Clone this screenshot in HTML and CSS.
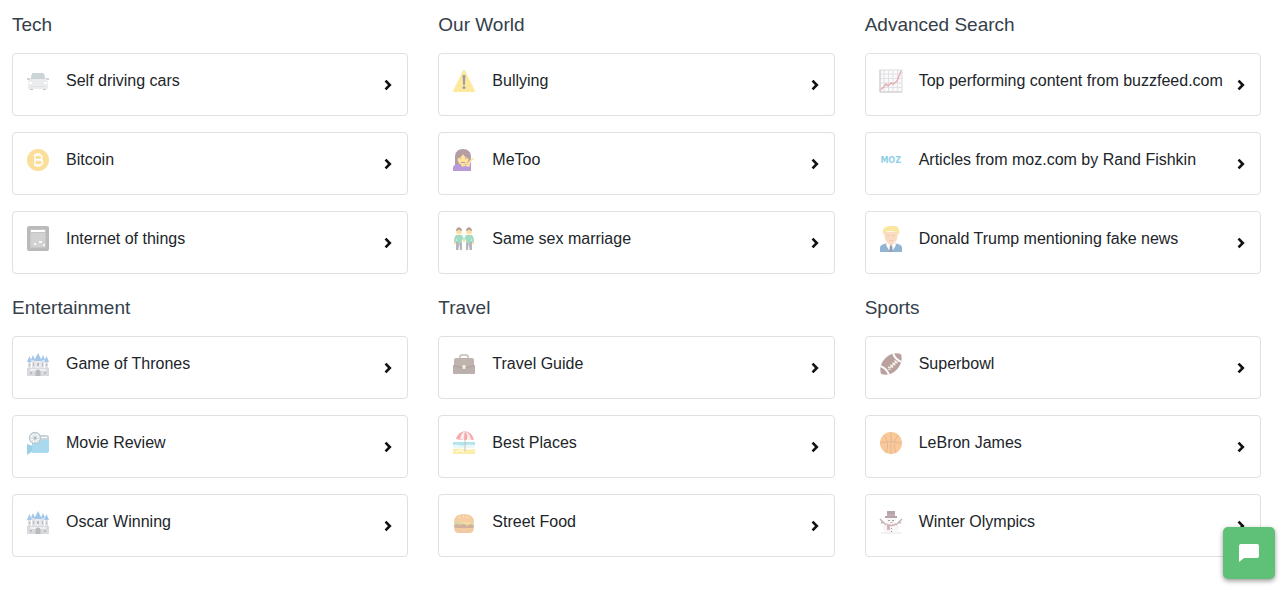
FILE: index.html
```html
<!DOCTYPE html>
<html lang="en">
<head>
    <meta charset="UTF-8">
    <meta name="viewport" content="width=device-width, initial-scale=1.0">
    <title>Content Ideas</title>
    <link rel="stylesheet" href="styles.css">
</head>
<body>
    <!-- Shared shapes -->
    <svg class="sprite" aria-hidden="true">
        <symbol id="chevron" viewBox="0 0 8 12">
            <path d="M1.5 1.7 5.8 6 1.5 10.3" fill="none" stroke="currentColor" stroke-width="2.6"/>
        </symbol>
        <symbol id="castle" viewBox="0 0 24 24">
            <path d="M2 9h3v10H2zM19 9h3v10h-3zM6 8h4v11H6zM14 8h4v11h-4z" fill="#c3c5cd"/>
            <path d="M9 9h6v10H9z" fill="#d4d6dc"/>
            <path d="M1 16h22v8H1z" fill="#b4b6bc"/>
            <path d="M4 17h16v2H4z" fill="#e2e3e6"/>
            <path d="M12 1l4 8H8zM7 3l2 5H5zM17 3l2 5h-4zM3.500 4L6 10H1zM20.500 4L23 10h-5z" fill="#4a8fd8"/>
            <path d="M9.500 24v-4a2.500 2.500 0 0 1 5 0v4z" fill="#77787f"/>
            <path d="M11 11h2v3h-2zM7 11h1v3H7zM16 11h1v3h-1zM3 12h1v2H3zM20 12h1v2h-1zM4 20h2v2H4zM18 20h2v2h-2z" fill="#777a85"/>
        </symbol>
    </svg>

    <main class="topics">
        <section class="topic">
            <h2>Tech</h2>
            <ul>
                <li><a class="card" href="#">
                    <svg class="icon" viewBox="0 0 24 24" aria-hidden="true">
                        <path d="M7 4h10q1 0 1.500 2l1 5h-15l1-5Q6 4 7 4z" fill="#9aabb3"/>
                        <path d="M1 9h3l1 2H1zM20 9h3v2h-4z" fill="#a0a8ac"/>
                        <path d="M4 18h3v3H4zM17 18h3v3h-3z" fill="#888"/>
                        <path d="M4 10h16l2 3v6q0 1-1 1H3q-1 0-1-1v-6z" fill="#d9dbdc"/>
                        <path d="M3 13h3v2H3zM18 13h3v2h-3z" fill="#fff"/>
                        <path d="M4 17h16v1H4z" fill="#c2c6c8"/>
                    </svg>
                    <span class="name">Self driving cars</span>
                    <svg class="arrow" aria-hidden="true"><use href="#chevron"/></svg>
                </a></li>
                <li><a class="card" href="#">
                    <svg class="icon" viewBox="0 0 24 24" aria-hidden="true">
                        <circle cx="12" cy="12" r="11" fill="#f9c035"/>
                        <path d="M9 7h4.500a2.300 2.300 0 0 1 0 4.800H9zM9 12h5a2.500 2.500 0 0 1 0 5H9zM8 7h2M8 17h2M11 5v2M13.500 5v2M11 17v2M13.500 17v2" fill="none" stroke="#fff" stroke-width="1.500"/>
                    </svg>
                    <span class="name">Bitcoin</span>
                    <svg class="arrow" aria-hidden="true"><use href="#chevron"/></svg>
                </a></li>
                <li><a class="card" href="#">
                    <svg class="icon icon-tall" viewBox="0 0 24 26" aria-hidden="true">
                        <rect x="1" y="0" width="22" height="25" rx="2" fill="#777"/>
                        <rect x="4" y="3" width="16" height="19" fill="#8c8c8c"/>
                        <path d="M5 4h14v2H5z" fill="#fff"/>
                        <path d="M5 7h14v14H5z" fill="#a6a6a6"/>
                        <path d="M8 17h2v2H8zM13 15h3v2h-3zM17 18h2v2h-2z" fill="#eee"/>
                    </svg>
                    <span class="name">Internet of things</span>
                    <svg class="arrow" aria-hidden="true"><use href="#chevron"/></svg>
                </a></li>
            </ul>
        </section>

        <section class="topic">
            <h2>Our World</h2>
            <ul>
                <li><a class="card" href="#">
                    <svg class="icon" viewBox="0 0 24 24" aria-hidden="true">
                        <path d="M12 2l10 20H2z" fill="#fcd53f" stroke="#fcd53f" stroke-width="2" stroke-linejoin="round"/>
                        <path d="M10.500 6h3l-.6 10h-1.800z" fill="#444"/>
                        <circle cx="12" cy="18.500" r="1.500" fill="#444"/>
                    </svg>
                    <span class="name">Bullying</span>
                    <svg class="arrow" aria-hidden="true"><use href="#chevron"/></svg>
                </a></li>
                <li><a class="card" href="#">
                    <svg class="icon" viewBox="0 0 24 24" aria-hidden="true">
                        <path d="M3 17V9c0-5 3-8 8-8s8 3 8 8v7z" fill="#6d3f45"/>
                        <path d="M1 23v-3q0-3 4-4h10l4-2v9z" fill="#7437b8"/>
                        <path d="M9 14h4v4l-2 1-2-1z" fill="#f0b030"/>
                        <ellipse cx="11" cy="11" rx="5.500" ry="6" fill="#fcc93d"/>
                        <path d="M5 11c3-1 5-3 6-5 1 2 3 4 6 5-1-6-3-7-6-7s-5 1-6 7z" fill="#6d3f45"/>
                        <path d="M13 18l6-7 3-1v1l-3 2-2 6z" fill="#fcc93d"/>
                        <path d="M8 10h1v1H8zM13 10h1v1h-1zM9 14h4v1H9z" fill="#704030"/>
                    </svg>
                    <span class="name">MeToo</span>
                    <svg class="arrow" aria-hidden="true"><use href="#chevron"/></svg>
                </a></li>
                <li><a class="card" href="#">
                    <svg class="icon" viewBox="0 0 24 24" aria-hidden="true">
                        <path d="M4 14h6v9H8l-.8-7-.8 7H4zM14 14h6v9h-2.400l-.8-7-.8 7h-2z" fill="#66727b"/>
                        <path d="M4 8h6q1.500 2 2 6 .5-4 2-6h6q2 2 2 7h-2l-1-4v5h-5v-4l-2 3-2-3v4H5v-5l-1 4H2q0-5 2-7z" fill="#45b989"/>
                        <circle cx="7" cy="4.500" r="3" fill="#f6c245"/>
                        <circle cx="17" cy="4.500" r="3" fill="#f6c245"/>
                        <path d="M4 4c0-5 6-5 6 0L7 3zM14 4c0-5 6-5 6 0l-3-1z" fill="#6b4a3c"/>
                        <path d="M2 15h2v2H2zM20 15h2v2h-2zM11 13h2v2h-2z" fill="#f6c245"/>
                    </svg>
                    <span class="name">Same sex marriage</span>
                    <svg class="arrow" aria-hidden="true"><use href="#chevron"/></svg>
                </a></li>
            </ul>
        </section>

        <section class="topic">
            <h2>Advanced Search</h2>
            <ul>
                <li><a class="card" href="#">
                    <svg class="icon" viewBox="0 0 24 24" aria-hidden="true">
                        <rect x="1" y="1" width="22" height="22" fill="#f7f7f7" stroke="#bbb"/>
                        <path d="M5 1v22M9.500 1v22M14 1v22M18.500 1v22M1 5h22M1 9.500h22M1 14h22M1 18.500h22" stroke="#c4c4cc"/>
                        <path d="M1 21l4-3 2-3 2 2 3-3 2 1 4-3 4-10" fill="none" stroke="#c9636d" stroke-width="1.500"/>
                        <path d="M1 1v22h22" fill="none" stroke="#a99"/>
                    </svg>
                    <span class="name">Top performing content from buzzfeed.com</span>
                    <svg class="arrow" aria-hidden="true"><use href="#chevron"/></svg>
                </a></li>
                <li><a class="card" href="#">
                    <span class="icon moz">MOZ</span>
                    <span class="name">Articles from moz.com by Rand Fishkin</span>
                    <svg class="arrow" aria-hidden="true"><use href="#chevron"/></svg>
                </a></li>
                <li><a class="card" href="#">
                    <svg class="icon icon-tall" viewBox="0 0 24 26" aria-hidden="true">
                        <path d="M1 26v-4q0-3 4-4l5-1h4l5 1q4 1 4 4v4z" fill="#2769a8"/>
                        <path d="M8 17h8l1 2-4 7h-2l-4-7z" fill="#fff"/>
                        <path d="M11 19h2l1 7h-4z" fill="#27406a"/>
                        <path d="M9 13h6v4l-3 3-3-3z" fill="#eca56e"/>
                        <path d="M5 6h14l-1 7q-1 4-6 5-5-1-6-5z" fill="#f6b985"/>
                        <path d="M4 9q-2-8 6-9h7q4 2 3 9l-2-3-7-1-5 1z" fill="#f7cf3f"/>
                        <path d="M8 9h3v1H8zM13 9h3v1h-3zM10 14h4v1h-4z" fill="#dc9a65"/>
                    </svg>
                    <span class="name">Donald Trump mentioning fake news</span>
                    <svg class="arrow" aria-hidden="true"><use href="#chevron"/></svg>
                </a></li>
            </ul>
        </section>

        <section class="topic">
            <h2>Entertainment</h2>
            <ul>
                <li><a class="card" href="#">
                    <svg class="icon" aria-hidden="true"><use href="#castle"/></svg>
                    <span class="name">Game of Thrones</span>
                    <svg class="arrow" aria-hidden="true"><use href="#chevron"/></svg>
                </a></li>
                <li><a class="card" href="#">
                    <svg class="icon" viewBox="0 0 24 24" aria-hidden="true">
                        <path d="M14 4h7q2 0 2 2v4h-9z" fill="#8eaebd"/>
                        <path d="M15 6h6v1h-6z" fill="#fff"/>
                        <path d="M1 13l6 2v5l-6 4z" fill="#3ba3d1"/>
                        <path d="M6 11l3-2h14v12l-2 1H7q-1 0-1-1z" fill="#56b5de"/>
                        <circle cx="9" cy="7" r="5.500" fill="#eef2f4" stroke="#748c98" stroke-width="1.300"/>
                        <path d="M9 1.500v11M3.500 7h11M5 3l8 8M13 3l-8 8" stroke="#8ea3ad" stroke-width=".8"/>
                        <circle cx="9" cy="7" r="1.500" fill="#5f7884"/>
                    </svg>
                    <span class="name">Movie Review</span>
                    <svg class="arrow" aria-hidden="true"><use href="#chevron"/></svg>
                </a></li>
                <li><a class="card" href="#">
                    <svg class="icon" aria-hidden="true"><use href="#castle"/></svg>
                    <span class="name">Oscar Winning</span>
                    <svg class="arrow" aria-hidden="true"><use href="#chevron"/></svg>
                </a></li>
            </ul>
        </section>

        <section class="topic">
            <h2>Travel</h2>
            <ul>
                <li><a class="card" href="#">
                    <svg class="icon" viewBox="0 0 24 24" aria-hidden="true">
                        <path d="M8 7V5q0-2 2-2h4q2 0 2 2v2" fill="none" stroke="#8b7c76" stroke-width="1.500"/>
                        <rect x="2" y="6" width="20" height="16" rx="2" fill="#836b63"/>
                        <path d="M1 13h22v8q0 1-1 1H2q-1 0-1-1z" fill="#7a635b"/>
                        <path d="M2 13q10 5 20 0v1q-10 5-20 0z" fill="#5c4841"/>
                        <rect x="10.500" y="13" width="3" height="4" rx="1" fill="#f1e8c8"/>
                    </svg>
                    <span class="name">Travel Guide</span>
                    <svg class="arrow" aria-hidden="true"><use href="#chevron"/></svg>
                </a></li>
                <li><a class="card" href="#">
                    <svg class="icon" viewBox="0 0 24 24" aria-hidden="true">
                        <path d="M1 11h22v5H1z" fill="#69cbd9"/>
                        <path d="M1 14q3-1 6 0t6 0 10 0v3H1z" fill="#d3f2f5"/>
                        <path d="M2 18q4-1 8 0t13 0v5H1v-5z" fill="#fbdc55"/>
                        <path d="M13 2v18" stroke="#91857e"/>
                        <path d="M4 8q2-7 9-8 7 1 9 9-4-1-9 0-5 0-9-1z" fill="#ee5555"/>
                        <path d="M8 8q1-6 5-8-1 4-1 9zM15 9q1-6-2-9 5 2 6 9z" fill="#f4dbe2"/>
                        <path d="M4 21l4-2 4 2" stroke="#fff" fill="none"/>
                    </svg>
                    <span class="name">Best Places</span>
                    <svg class="arrow" aria-hidden="true"><use href="#chevron"/></svg>
                </a></li>
                <li><a class="card" href="#">
                    <svg class="icon" viewBox="0 0 24 24" aria-hidden="true">
                        <path d="M2 17h20q0 6-5 6H7q-5 0-5-6z" fill="#e89947"/>
                        <rect x="2" y="14" width="20" height="4" rx="2" fill="#a8623e"/>
                        <path d="M2 12h20l-1 3-3-1-3 2-3-2-4 1-3-1-3 1z" fill="#a9b650"/>
                        <path d="M3 11h18l-4 4z" fill="#fbb63e"/>
                        <path d="M2 12Q2 4 12 4t10 8z" fill="#ec9f49"/>
                        <path d="M7 7h1v1H7zM11 6h1v1h-1zM15 7h1v1h-1z" fill="#fff0c2"/>
                    </svg>
                    <span class="name">Street Food</span>
                    <svg class="arrow" aria-hidden="true"><use href="#chevron"/></svg>
                </a></li>
            </ul>
        </section>

        <section class="topic">
            <h2>Sports</h2>
            <ul>
                <li><a class="card" href="#">
                    <svg class="icon" viewBox="0 0 24 24" aria-hidden="true">
                        <g transform="rotate(-45 12 12)">
                            <path d="M-2 12Q2 4 12 4t14 8q-4 8-14 8T-2 12z" fill="#75483f"/>
                            <path d="M3 6q3 6 0 12M21 6q-3 6 0 12" fill="none" stroke="#fff" stroke-width="2"/>
                            <path d="M6 14h12M8 12v4M11 12v4M14 12v4M17 12v4" stroke="#f3e3cf" stroke-width="1.300"/>
                        </g>
                    </svg>
                    <span class="name">Superbowl</span>
                    <svg class="arrow" aria-hidden="true"><use href="#chevron"/></svg>
                </a></li>
                <li><a class="card" href="#">
                    <svg class="icon" viewBox="0 0 24 24" aria-hidden="true">
                        <circle cx="12" cy="12" r="11" fill="#f99333"/>
                        <path d="M12 1v22M1 12q11-3 22 0M5 4q6 8 2 18M19 4q-6 8-2 18" fill="none" stroke="#c47333"/>
                    </svg>
                    <span class="name">LeBron James</span>
                    <svg class="arrow" aria-hidden="true"><use href="#chevron"/></svg>
                </a></li>
                <li><a class="card" href="#">
                    <svg class="icon" viewBox="0 0 24 24" aria-hidden="true">
                        <ellipse cx="12" cy="18" rx="8" ry="5" fill="#eeeeef"/>
                        <circle cx="12" cy="10" r="5" fill="#f1f1f2"/>
                        <path d="M2 23h20" stroke="#ccc"/>
                        <path d="M8 1h8v5h2v2H6V6h2z" fill="#6a4e55"/>
                        <path d="M8 5h8" stroke="#b5606a"/>
                        <path d="M7 13q5 3 10 0v2q-4 2-6 1v4H8v-5z" fill="#a96b75"/>
                        <path d="M1 9l3 3 3 3M2 13l3-1M23 9l-3 3-3 3M22 13l-3-1" fill="none" stroke="#8b6c6c" stroke-width="1.500"/>
                        <path d="M9 10h2v1H9zM13 10h2v1h-2zM12 18h1v1h-1zM12 21h1v1h-1z" fill="#444"/>
                        <path d="M11 12h3v1h-3z" fill="#e06a45"/>
                    </svg>
                    <span class="name">Winter Olympics</span>
                    <svg class="arrow" aria-hidden="true"><use href="#chevron"/></svg>
                </a></li>
            </ul>
        </section>
    </main>

    <!-- Chat launcher -->
    <button type="button" class="chat" aria-label="Open chat">
        <svg viewBox="0 0 20 18" aria-hidden="true">
            <path d="M2 0h16q2 0 2 2v10q0 2-2 2H5l-5 4V2q0-2 2-2z" fill="#fff"/>
        </svg>
    </button>
</body>
</html>
```

FILE: styles.css
```css
body {
    margin: 0;
    font-family: "Liberation Sans", Arial, sans-serif;
    font-size: 16px;
    line-height: 24px;
    color: #212529;
    background-color: #fff;
}
.sprite {
    display: none;
}
.topics {
    display: grid;
    grid-template-columns: repeat(3, 1fr);
    gap: 23px 30px;
    padding: 14px 24px 24px 12px;
}
.topic h2 {
    margin: 0 0 17px;
    font-size: 19px;
    line-height: 22px;
    font-weight: normal;
    color: #35404a;
}
.topic ul {
    display: grid;
    gap: 16px;
    margin: 0;
    padding: 0;
    list-style: none;
}
.card {
    display: flex;
    align-items: flex-start;
    padding: 0 15px 0 13px;
    border: 1px solid #dee0e2;
    border-radius: 4px;
    color: inherit;
    text-decoration: none;
}
.card:hover {
    border-color: #aaa;
}
.icon {
    flex: none;
    width: 24px;
    height: 24px;
    margin: 15px 16px 0 0;
    opacity: 0.5;
}
.icon-tall {
    height: 26px;
    margin-top: 14px;
}
.moz {
    font-family: "DejaVu Sans", sans-serif;
    font-size: 8px;
    line-height: 26px;
    font-weight: bold;
    text-align: center;
    color: #1a9fd0;
}
.name {
    flex: 1;
    padding: 15px 0 22px;
}
.arrow {
    flex: none;
    align-self: center;
    width: 8px;
    height: 12px;
    color: #111;
}
.chat {
    position: fixed;
    right: 10px;
    bottom: 32px;
    display: flex;
    align-items: center;
    justify-content: center;
    width: 52px;
    height: 52px;
    padding: 0;
    border: none;
    border-radius: 5px;
    background-color: #5fc077;
    box-shadow: 0 2px 5px rgba(0, 0, 0, 0.4);
    cursor: pointer;
}
.chat svg {
    width: 20px;
    height: 18px;
}
```
